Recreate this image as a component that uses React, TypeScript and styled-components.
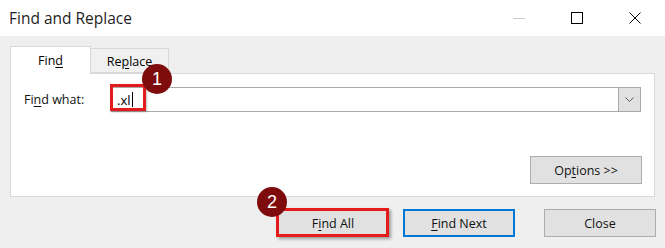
import * as React from 'react';
import styled, { createGlobalStyle } from 'styled-components';

const GlobalStyle = createGlobalStyle`
  html, body {
    margin: 0;
    padding: 0;
    background: #efefef;
  }
  body {
    font-family: 'Open Sans', 'Noto Sans', 'Liberation Sans', sans-serif;
    color: #000;
  }
`;

const App: React.FC = () => {
  return (
    <Window>
      <GlobalStyle />
      <TitleBar>
        <Title>Find and Replace</Title>
        <Controls>
          <ControlButton>
            <svg width="12" height="12" viewBox="0 0 12 12">
              <line x1="0" y1="6.5" x2="12" y2="6.5" stroke="#c9c9c9" strokeWidth="1" />
            </svg>
          </ControlButton>
          <ControlButton>
            <svg width="12" height="12" viewBox="0 0 12 12">
              <rect x="0.5" y="0.5" width="11" height="11" fill="none" stroke="#000" strokeWidth="1" />
            </svg>
          </ControlButton>
          <ControlButton>
            <svg width="12" height="12" viewBox="0 0 12 12">
              <path d="M0.5 0.5 L11.5 11.5 M11.5 0.5 L0.5 11.5" stroke="#000" strokeWidth="1" />
            </svg>
          </ControlButton>
        </Controls>
      </TitleBar>

      <Body>
        <Tabs>
          <Tab active>
            Fin<U>d</U>
          </Tab>
          <Tab>
            Re<U>p</U>lace
          </Tab>
        </Tabs>

        <Panel>
          <FieldRow>
            <Label>
              Fi<U>n</U>d what:
            </Label>
            <Combo>
              <Input>
                .xl<Caret />
              </Input>
              <DropButton>
                <svg width="9" height="5" viewBox="0 0 9 5">
                  <path d="M0.5 0.5 L4.5 4.5 L8.5 0.5" fill="none" stroke="#555" strokeWidth="1" />
                </svg>
              </DropButton>
            </Combo>
            <Highlight style={{ left: 86, top: -3, width: 30, height: 21 }} />
            <Badge style={{ left: 118, top: -23 }}>1</Badge>
          </FieldRow>

          <PanelFooter>
            <Button>
              Op<U>t</U>ions &gt;&gt;
            </Button>
          </PanelFooter>
        </Panel>

        <ButtonRow>
          <ButtonSlot>
            <Button>
              F<U>i</U>nd All
            </Button>
            <Highlight style={{ left: -1, top: -1, width: 107, height: 23 }} shadow />
            <Badge style={{ left: -20, top: -22 }}>2</Badge>
          </ButtonSlot>
          <Button focused>
            <U>F</U>ind Next
          </Button>
          <CloseButton>Close</CloseButton>
        </ButtonRow>
      </Body>
    </Window>
  );
};

export default App;

const Window = styled.div`
  width: 665px;
  height: 248px;
  display: flex;
  flex-direction: column;
  overflow: hidden;
`;

const TitleBar = styled.div`
  height: 36px;
  background: #fff;
  display: flex;
  align-items: center;
  justify-content: space-between;
  padding-left: 9px;
`;

const Title = styled.div`
  font-size: 15.5px;
  color: #1f1f1f;
  margin-top: -1px;
`;

const Controls = styled.div`
  display: flex;
  padding-right: 1px;
`;

const ControlButton = styled.div`
  width: 58px;
  height: 36px;
  display: flex;
  align-items: center;
  justify-content: center;
  svg {
    display: block;
  }
`;

const Body = styled.div`
  flex: 1;
  background: #efefef;
  padding: 10px 10px 0 10px;
  font-size: 12.5px;
`;

const Tabs = styled.div`
  display: flex;
  align-items: flex-end;
  height: 27px;
`;

const Tab = styled.div<{ active?: boolean }>`
  box-sizing: border-box;
  height: ${(p) => (p.active ? '28px' : '25px')};
  width: ${(p) => (p.active ? '81px' : '78px')};
  margin-bottom: ${(p) => (p.active ? '-1px' : '0')};
  background: ${(p) => (p.active ? '#fff' : '#f0f0f0')};
  border: 1px solid #d9d9d9;
  border-bottom: ${(p) => (p.active ? 'none' : '1px solid #d9d9d9')};
  border-left: ${(p) => (p.active ? '1px solid #d9d9d9' : 'none')};
  display: flex;
  align-items: center;
  justify-content: center;
  padding-top: ${(p) => (p.active ? '0' : '1px')};
  position: relative;
  z-index: ${(p) => (p.active ? 1 : 0)};
`;

const U = styled.span`
  text-decoration: underline;
  text-underline-offset: 2px;
`;

const Panel = styled.div`
  box-sizing: border-box;
  width: 645px;
  height: 124px;
  background: #fff;
  border: 1px solid #d9d9d9;
  display: flex;
  flex-direction: column;
  justify-content: space-between;
  padding: 13px 12px 12px 13px;
`;

const FieldRow = styled.div`
  display: flex;
  align-items: center;
  position: relative;
`;

const Label = styled.div`
  width: 87px;
  color: #111;
`;

const Combo = styled.div`
  display: flex;
  width: 530px;
  height: 25px;
  box-sizing: border-box;
  border: 1px solid #a9a9a9;
`;

const Input = styled.div`
  flex: 1;
  display: flex;
  align-items: center;
  padding-left: 5px;
  font-size: 13px;
`;

const Caret = styled.span`
  display: inline-block;
  width: 1px;
  height: 15px;
  background: #000;
  margin-left: 1px;
`;

const DropButton = styled.div`
  width: 21px;
  background: #e1e1e1;
  border-left: 1px solid #a9a9a9;
  display: flex;
  align-items: center;
  justify-content: center;
`;

const Highlight = styled.div<{ shadow?: boolean }>`
  position: absolute;
  border: 3px solid #e31b1b;
  box-shadow: ${(p) => (p.shadow ? '2px 2px 3px rgba(0,0,0,0.35)' : '1px 1px 2px rgba(0,0,0,0.25)')};
  pointer-events: none;
`;

const Badge = styled.div`
  position: absolute;
  width: 30px;
  height: 30px;
  border-radius: 50%;
  background: #7f0c0c;
  color: #fff;
  font-family: 'Liberation Sans', Arial, sans-serif;
  font-size: 18px;
  display: flex;
  align-items: center;
  justify-content: center;
  line-height: 1;
`;

const PanelFooter = styled.div`
  display: flex;
  justify-content: flex-end;
`;

const Button = styled.div<{ focused?: boolean }>`
  box-sizing: border-box;
  width: 112px;
  height: 28px;
  background: #e1e1e1;
  border: ${(p) => (p.focused ? '2px solid #0078d7' : '1px solid #adadad')};
  display: flex;
  align-items: center;
  justify-content: center;
  color: #111;
`;

const CloseButton = styled(Button)``;

const ButtonRow = styled.div`
  display: flex;
  justify-content: flex-end;
  gap: 14px;
  padding-top: 12px;
  margin-right: -1px;
  & > ${CloseButton} {
    margin-left: 15px;
  }
`;

const ButtonSlot = styled.div`
  position: relative;
  display: flex;
`;
